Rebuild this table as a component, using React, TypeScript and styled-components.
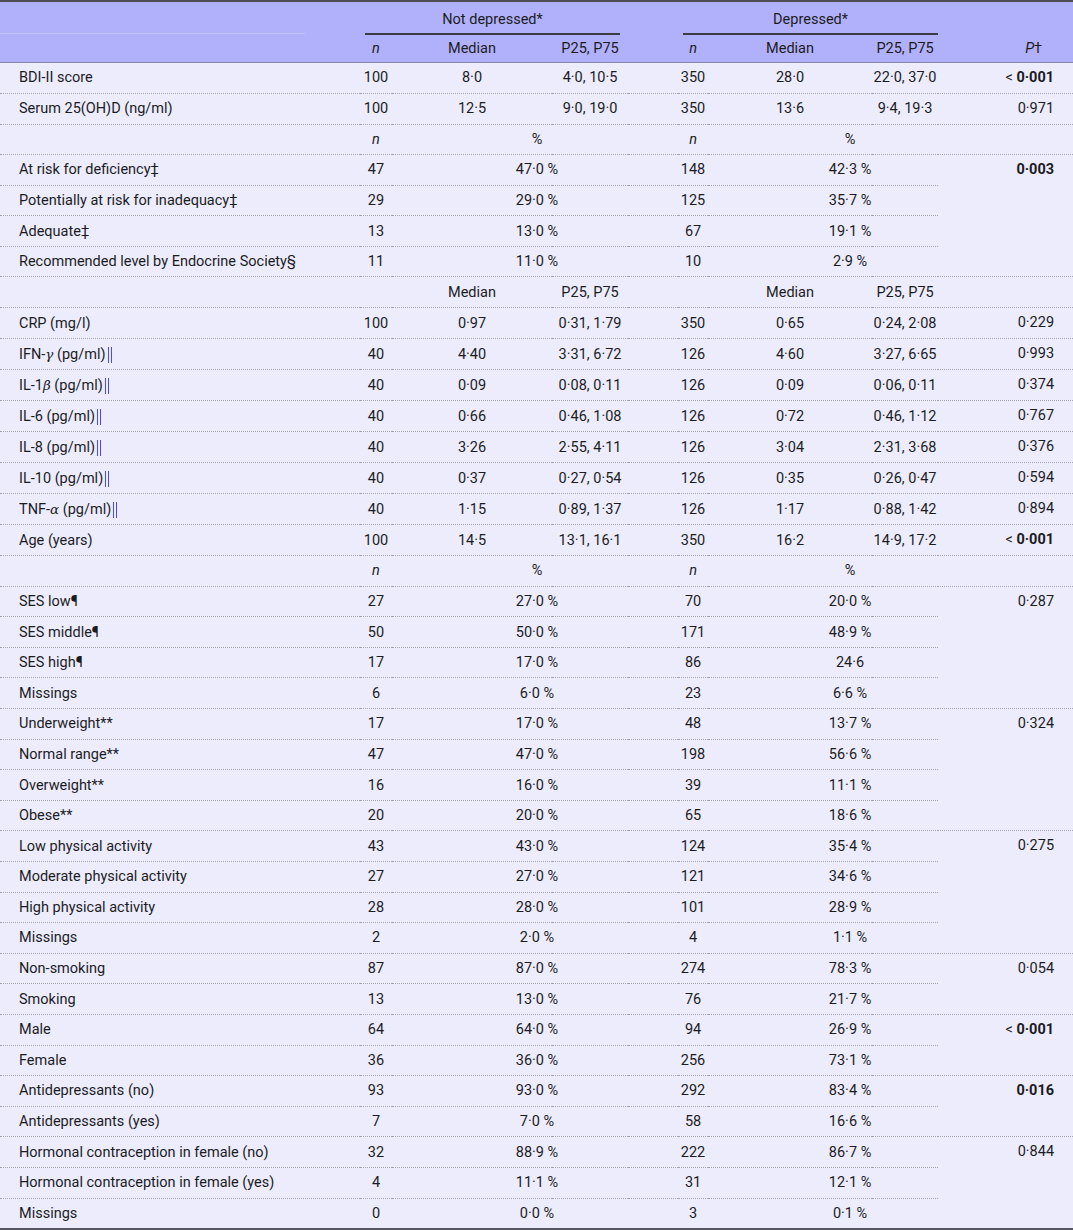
import React from "react";
import styled, { createGlobalStyle, css } from "styled-components";

const GlobalStyle = createGlobalStyle`
  html, body { margin: 0; padding: 0; background: #ffffff; }
  body { font-family: Roboto, "Noto Sans", "Liberation Sans", sans-serif; }
`;

const Table = styled.table`
  width: 1073px;
  border-collapse: collapse;
  table-layout: fixed;
  font-size: 14.5px;
  color: #1c1c1f;
  background: #ececfd;
  border-top: 2px solid #4d4d55;
  border-bottom: 2px solid #56565e;
`;

const Head = styled.thead`
  background: #b1b1fb;
`;

const HeadRow = styled.tr<{ $top?: boolean }>`
  height: ${(p) => (p.$top ? "33px" : "27px")};
  ${(p) =>
    !p.$top &&
    css`
      border-bottom: 1px solid #8686a6;
    `}
`;

const HeadCell = styled.th<{ $align?: "left" | "center" | "right"; $pr?: number; $pl?: number }>`
  font-weight: 400;
  padding: 0;
  padding-right: ${(p) => p.$pr ?? 0}px;
  padding-left: ${(p) => p.$pl ?? 0}px;
  text-align: ${(p) => p.$align ?? "center"};
  vertical-align: middle;
  white-space: nowrap;
`;

const StubHeadCell = styled.th`
  padding: 0 0 1px 0;
  vertical-align: bottom;
`;

const FaintRule = styled.div`
  width: 305px;
  border-bottom: 1px solid #c3c3fb;
`;

const GroupHeadCell = styled.th<{ $ml: number; $mr: number }>`
  font-weight: 400;
  padding: 0;
  vertical-align: bottom;
  & > div {
    margin-left: ${(p) => p.$ml}px;
    margin-right: ${(p) => p.$mr}px;
    border-bottom: 2px solid #3c3c48;
    height: 33px;
    display: flex;
    align-items: center;
    justify-content: center;
    box-sizing: border-box;
    padding-top: 4px;
  }
`;

const Row = styled.tr`
  height: 30.6px;
`;

const Cell = styled.td<{ $align?: "left" | "center" | "right"; $pl?: number; $pr?: number; $last?: boolean }>`
  padding: 0;
  padding-left: ${(p) => p.$pl ?? 0}px;
  padding-right: ${(p) => p.$pr ?? 0}px;
  text-align: ${(p) => p.$align ?? "center"};
  vertical-align: middle;
  white-space: nowrap;
  border-bottom: ${(p) => (p.$last ? "none" : "1px dotted #a3a3b6")};
`;

const PCell = styled.td<{ $last?: boolean }>`
  padding: 0 19px 0 0;
  text-align: right;
  vertical-align: top;
  line-height: 30px;
  white-space: nowrap;
  border-bottom: ${(p) => (p.$last ? "none" : "1px dotted #a3a3b6")};
`;

const Italic = styled.i`
  font-style: italic;
`;

const Greek = styled.i`
  font-family: "DejaVu Serif", "Liberation Serif", serif;
  font-style: italic;
  font-size: 13.5px;
`;

const Mark = styled.span`
  display: inline-block;
  width: 2px;
  height: 16px;
  margin-left: 2px;
  vertical-align: -4px;
  border-left: 1px solid #4a4aff;
  border-right: 1px solid #4a4aff;
`;

const Bold = styled.b`
  font-weight: 700;
`;

type P = { v: string; bold?: boolean; lt?: boolean; span?: number } | "covered";

type DataRow =
  | { kind: "cont"; label: React.ReactNode; n1: string; m1: string; q1: string; n2: string; m2: string; q2: string; p: P }
  | { kind: "cat"; label: React.ReactNode; n1: string; c1: string; n2: string; c2: string; p: P }
  | { kind: "npct" }
  | { kind: "medhead" };

const mark = <Mark aria-label="‖" />;

const rows: DataRow[] = [
  { kind: "cont", label: "BDI-II score", n1: "100", m1: "8·0", q1: "4·0, 10·5", n2: "350", m2: "28·0", q2: "22·0, 37·0", p: { v: "0·001", bold: true, lt: true } },
  { kind: "cont", label: "Serum 25(OH)D (ng/ml)", n1: "100", m1: "12·5", q1: "9·0, 19·0", n2: "350", m2: "13·6", q2: "9·4, 19·3", p: { v: "0·971" } },
  { kind: "npct" },
  { kind: "cat", label: "At risk for deficiency‡", n1: "47", c1: "47·0 %", n2: "148", c2: "42·3 %", p: { v: "0·003", bold: true, span: 4 } },
  { kind: "cat", label: "Potentially at risk for inadequacy‡", n1: "29", c1: "29·0 %", n2: "125", c2: "35·7 %", p: "covered" },
  { kind: "cat", label: "Adequate‡", n1: "13", c1: "13·0 %", n2: "67", c2: "19·1 %", p: "covered" },
  { kind: "cat", label: "Recommended level by Endocrine Society§", n1: "11", c1: "11·0 %", n2: "10", c2: "2·9 %", p: "covered" },
  { kind: "medhead" },
  { kind: "cont", label: "CRP (mg/l)", n1: "100", m1: "0·97", q1: "0·31, 1·79", n2: "350", m2: "0·65", q2: "0·24, 2·08", p: { v: "0·229" } },
  { kind: "cont", label: <>IFN-<Greek>γ</Greek> (pg/ml){mark}</>, n1: "40", m1: "4·40", q1: "3·31, 6·72", n2: "126", m2: "4·60", q2: "3·27, 6·65", p: { v: "0·993" } },
  { kind: "cont", label: <>IL-1<Greek>β</Greek> (pg/ml){mark}</>, n1: "40", m1: "0·09", q1: "0·08, 0·11", n2: "126", m2: "0·09", q2: "0·06, 0·11", p: { v: "0·374" } },
  { kind: "cont", label: <>IL-6 (pg/ml){mark}</>, n1: "40", m1: "0·66", q1: "0·46, 1·08", n2: "126", m2: "0·72", q2: "0·46, 1·12", p: { v: "0·767" } },
  { kind: "cont", label: <>IL-8 (pg/ml){mark}</>, n1: "40", m1: "3·26", q1: "2·55, 4·11", n2: "126", m2: "3·04", q2: "2·31, 3·68", p: { v: "0·376" } },
  { kind: "cont", label: <>IL-10 (pg/ml){mark}</>, n1: "40", m1: "0·37", q1: "0·27, 0·54", n2: "126", m2: "0·35", q2: "0·26, 0·47", p: { v: "0·594" } },
  { kind: "cont", label: <>TNF-<Greek>α</Greek> (pg/ml){mark}</>, n1: "40", m1: "1·15", q1: "0·89, 1·37", n2: "126", m2: "1·17", q2: "0·88, 1·42", p: { v: "0·894" } },
  { kind: "cont", label: "Age (years)", n1: "100", m1: "14·5", q1: "13·1, 16·1", n2: "350", m2: "16·2", q2: "14·9, 17·2", p: { v: "0·001", bold: true, lt: true } },
  { kind: "npct" },
  { kind: "cat", label: "SES low¶", n1: "27", c1: "27·0 %", n2: "70", c2: "20·0 %", p: { v: "0·287", span: 4 } },
  { kind: "cat", label: "SES middle¶", n1: "50", c1: "50·0 %", n2: "171", c2: "48·9 %", p: "covered" },
  { kind: "cat", label: "SES high¶", n1: "17", c1: "17·0 %", n2: "86", c2: "24·6", p: "covered" },
  { kind: "cat", label: "Missings", n1: "6", c1: "6·0 %", n2: "23", c2: "6·6 %", p: "covered" },
  { kind: "cat", label: "Underweight**", n1: "17", c1: "17·0 %", n2: "48", c2: "13·7 %", p: { v: "0·324", span: 4 } },
  { kind: "cat", label: "Normal range**", n1: "47", c1: "47·0 %", n2: "198", c2: "56·6 %", p: "covered" },
  { kind: "cat", label: "Overweight**", n1: "16", c1: "16·0 %", n2: "39", c2: "11·1 %", p: "covered" },
  { kind: "cat", label: "Obese**", n1: "20", c1: "20·0 %", n2: "65", c2: "18·6 %", p: "covered" },
  { kind: "cat", label: "Low physical activity", n1: "43", c1: "43·0 %", n2: "124", c2: "35·4 %", p: { v: "0·275", span: 4 } },
  { kind: "cat", label: "Moderate physical activity", n1: "27", c1: "27·0 %", n2: "121", c2: "34·6 %", p: "covered" },
  { kind: "cat", label: "High physical activity", n1: "28", c1: "28·0 %", n2: "101", c2: "28·9 %", p: "covered" },
  { kind: "cat", label: "Missings", n1: "2", c1: "2·0 %", n2: "4", c2: "1·1 %", p: "covered" },
  { kind: "cat", label: "Non-smoking", n1: "87", c1: "87·0 %", n2: "274", c2: "78·3 %", p: { v: "0·054", span: 2 } },
  { kind: "cat", label: "Smoking", n1: "13", c1: "13·0 %", n2: "76", c2: "21·7 %", p: "covered" },
  { kind: "cat", label: "Male", n1: "64", c1: "64·0 %", n2: "94", c2: "26·9 %", p: { v: "0·001", bold: true, lt: true, span: 2 } },
  { kind: "cat", label: "Female", n1: "36", c1: "36·0 %", n2: "256", c2: "73·1 %", p: "covered" },
  { kind: "cat", label: "Antidepressants (no)", n1: "93", c1: "93·0 %", n2: "292", c2: "83·4 %", p: { v: "0·016", bold: true, span: 2 } },
  { kind: "cat", label: "Antidepressants (yes)", n1: "7", c1: "7·0 %", n2: "58", c2: "16·6 %", p: "covered" },
  { kind: "cat", label: "Hormonal contraception in female (no)", n1: "32", c1: "88·9 %", n2: "222", c2: "86·7 %", p: { v: "0·844", span: 3 } },
  { kind: "cat", label: "Hormonal contraception in female (yes)", n1: "4", c1: "11·1 %", n2: "31", c2: "12·1 %", p: "covered" },
  { kind: "cat", label: "Missings", n1: "0", c1: "0·0 %", n2: "3", c2: "0·1 %", p: "covered" },
];

const PValue: React.FC<{ p: Exclude<P, "covered">; last: boolean }> = ({ p, last }) => (
  <PCell rowSpan={p.span ?? 1} $last={last}>
    {p.lt ? "< " : ""}
    {p.bold ? <Bold>{p.v}</Bold> : p.v}
  </PCell>
);

const PCT_PAD = 54;

export default function App() {
  const total = rows.length;
  return (
    <>
      <GlobalStyle />
      <Table>
        <colgroup>
          <col style={{ width: 360 }} />
          <col style={{ width: 32 }} />
          <col style={{ width: 160 }} />
          <col style={{ width: 76 }} />
          <col style={{ width: 50 }} />
          <col style={{ width: 30 }} />
          <col style={{ width: 164 }} />
          <col style={{ width: 66 }} />
          <col style={{ width: 135 }} />
        </colgroup>
        <Head>
          <HeadRow $top>
            <StubHeadCell>
              <FaintRule />
            </StubHeadCell>
            <GroupHeadCell colSpan={3} $ml={5} $mr={8}>
              <div>Not depressed*</div>
            </GroupHeadCell>
            <HeadCell />
            <GroupHeadCell colSpan={3} $ml={5} $mr={0}>
              <div>Depressed*</div>
            </GroupHeadCell>
            <HeadCell />
          </HeadRow>
          <HeadRow>
            <HeadCell />
            <HeadCell><Italic>n</Italic></HeadCell>
            <HeadCell>Median</HeadCell>
            <HeadCell>P25, P75</HeadCell>
            <HeadCell />
            <HeadCell><Italic>n</Italic></HeadCell>
            <HeadCell>Median</HeadCell>
            <HeadCell>P25, P75</HeadCell>
            <HeadCell $align="right" $pr={31}>
              <Italic>P</Italic>†
            </HeadCell>
          </HeadRow>
        </Head>
        <tbody>
          {rows.map((r, i) => {
            const last = i === total - 1;
            if (r.kind === "npct") {
              return (
                <Row key={i}>
                  <Cell />
                  <Cell><Italic>n</Italic></Cell>
                  <Cell colSpan={2} $pl={PCT_PAD}>%</Cell>
                  <Cell />
                  <Cell><Italic>n</Italic></Cell>
                  <Cell colSpan={2} $pl={PCT_PAD}>%</Cell>
                  <PCell />
                </Row>
              );
            }
            if (r.kind === "medhead") {
              return (
                <Row key={i}>
                  <Cell />
                  <Cell />
                  <Cell>Median</Cell>
                  <Cell>P25, P75</Cell>
                  <Cell />
                  <Cell />
                  <Cell>Median</Cell>
                  <Cell>P25, P75</Cell>
                  <PCell />
                </Row>
              );
            }
            if (r.kind === "cont") {
              return (
                <Row key={i}>
                  <Cell $align="left" $pl={19} $last={last}>{r.label}</Cell>
                  <Cell $last={last}>{r.n1}</Cell>
                  <Cell $last={last}>{r.m1}</Cell>
                  <Cell $last={last}>{r.q1}</Cell>
                  <Cell $last={last} />
                  <Cell $last={last}>{r.n2}</Cell>
                  <Cell $last={last}>{r.m2}</Cell>
                  <Cell $last={last}>{r.q2}</Cell>
                  {r.p !== "covered" && <PValue p={r.p} last={last} />}
                </Row>
              );
            }
            return (
              <Row key={i}>
                <Cell $align="left" $pl={19} $last={last}>{r.label}</Cell>
                <Cell $last={last}>{r.n1}</Cell>
                <Cell colSpan={2} $pl={PCT_PAD} $last={last}>{r.c1}</Cell>
                <Cell $last={last} />
                <Cell $last={last}>{r.n2}</Cell>
                <Cell colSpan={2} $pl={PCT_PAD} $last={last}>{r.c2}</Cell>
                {r.p !== "covered" && <PValue p={r.p} last={last || i + (r.p.span ?? 1) - 1 === total - 1} />}
              </Row>
            );
          })}
        </tbody>
      </Table>
    </>
  );
}
